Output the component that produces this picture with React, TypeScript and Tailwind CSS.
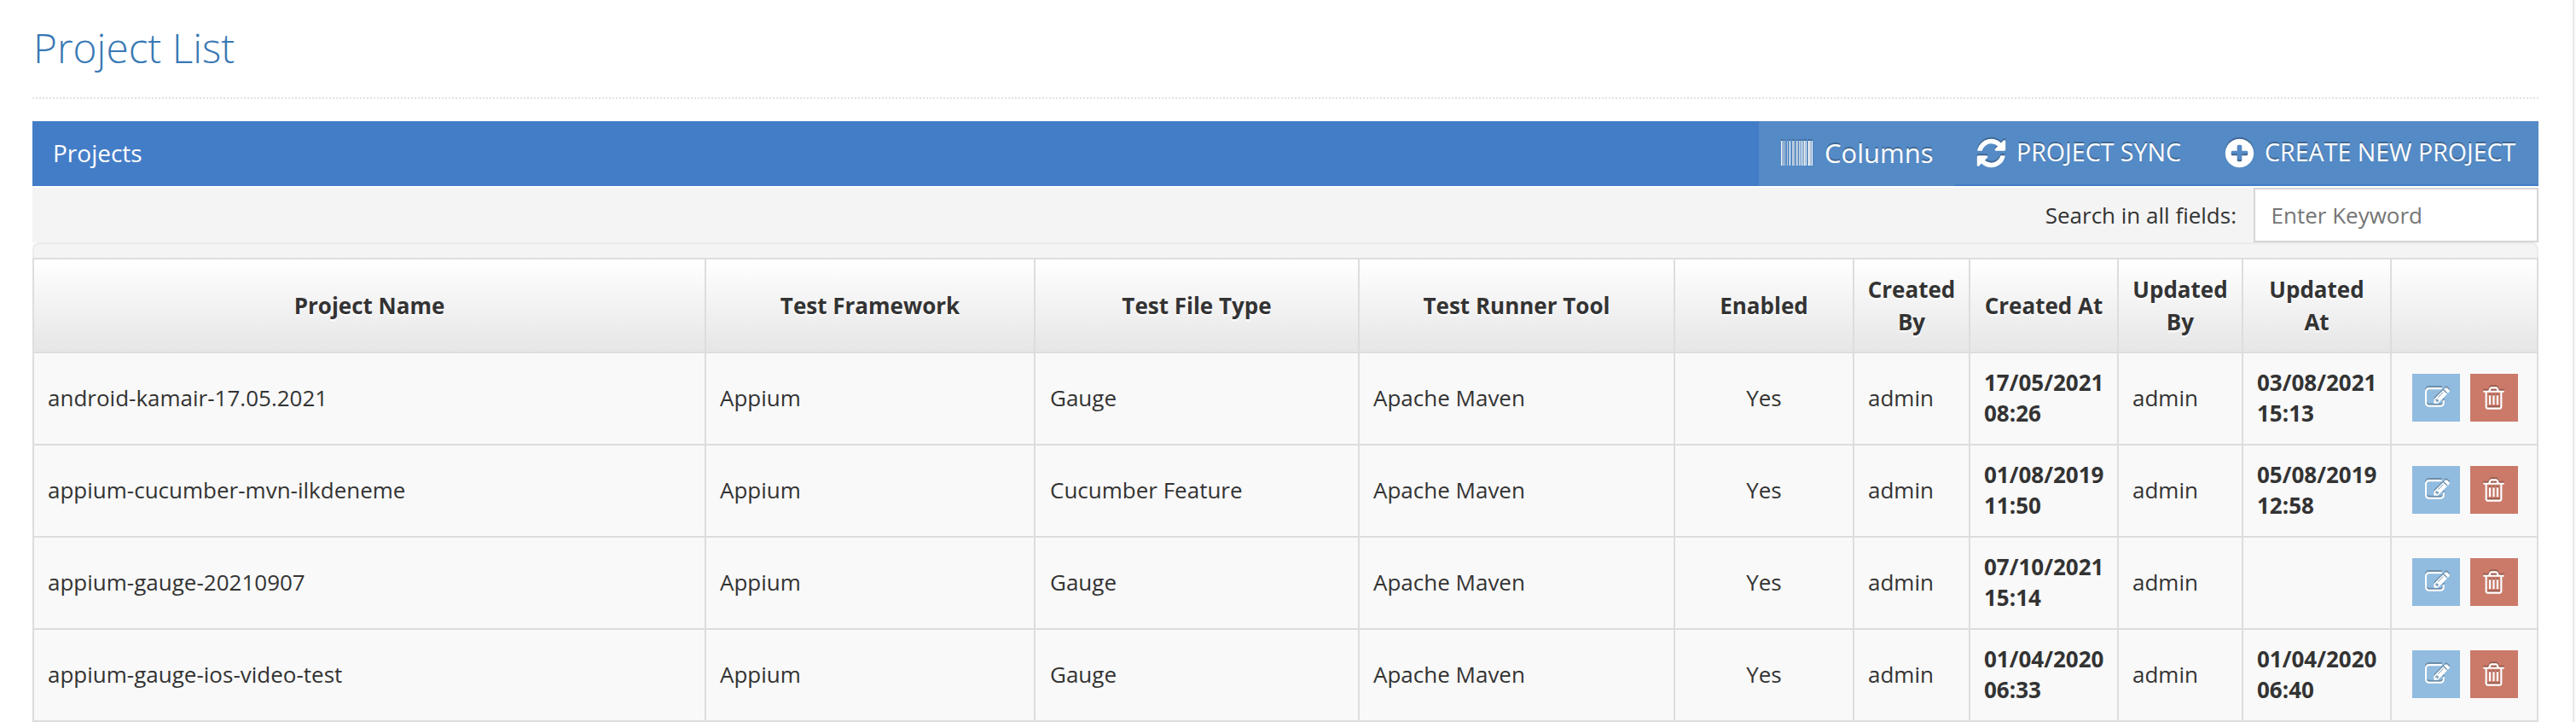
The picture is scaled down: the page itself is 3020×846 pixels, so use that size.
import React from "react";

const rows = [
  ["android-kamair-17.05.2021", "Gauge", "17/05/2021 08:26", "03/08/2021 15:13"],
  ["appium-cucumber-mvn-ilkdeneme", "Cucumber Feature", "01/08/2019 11:50", "05/08/2019 12:58"],
  ["appium-gauge-20210907", "Gauge", "07/10/2021 15:14", ""],
  ["appium-gauge-ios-video-test", "Gauge", "01/04/2020 06:33", "01/04/2020 06:40"],
];

const headers = [
  "Project Name",
  "Test Framework",
  "Test File Type",
  "Test Runner Tool",
  "Enabled",
  "Created By",
  "Created At",
  "Updated By",
  "Updated At",
  "",
];

const bars = [
  [0, 63], [94, 32], [189, 31], [346, 31], [472, 62], [629, 31], [692, 31], [755, 31],
  [880, 63], [1037, 63], [1163, 63], [1289, 63], [1383, 63], [1541, 94], [1666, 32], [1729, 63],
];

const iconShadow = "[filter:drop-shadow(0_-2px_0_rgba(0,0,0,0.25))]";

function BarcodeIcon() {
  return (
    <svg viewBox="0 0 1792 1408" className={`mb-px h-[29px] w-[37px] shrink-0 ${iconShadow}`} fill="#fff">
      {bars.map(([x, w]) => (
        <rect key={x} x={x} y="0" width={w} height="1408" />
      ))}
    </svg>
  );
}

function Glyph({ d, className }: { d: string; className: string }) {
  return (
    <svg viewBox="0 0 1792 1792" className={`shrink-0 ${className} ${iconShadow}`} fill="#fff">
      <path d={d} />
    </svg>
  );
}

const REFRESH =
  "M1639 1056q0 5-1 7-64 268-268 434.5t-478 166.5q-146 0-282.5-55t-243.5-157l-129 129q-19 19-45 19t-45-19-19-45v-448q0-26 19-45t45-19h448q26 0 45 19t19 45-19 45l-137 137q71 66 161 102t187 36q134 0 250-65t186-179q11-17 53-117 8-23 30-23h192q13 0 22.5 9.5t9.5 22.5zm25-800v448q0 26-19 45t-45 19h-448q-26 0-45-19t-19-45 19-45l138-138q-148-137-349-137-134 0-250 65t-186 179q-11 17-53 117-8 23-30 23h-199q-13 0-22.5-9.5t-9.5-22.5v-7q65-268 270-434.5t480-166.5q146 0 284 55.5t245 156.5l130-129q19-19 45-19t45 19 19 45z";
const PLUS_CIRCLE =
  "M1344 960v-128q0-26-19-45t-45-19h-256v-256q0-26-19-45t-45-19h-128q-26 0-45 19t-19 45v256h-256q-26 0-45 19t-19 45v128q0 26 19 45t45 19h256v256q0 26 19 45t45 19h128q26 0 45-19t19-45v-256h256q26 0 45-19t19-45zm320-64q0 209-103 385.5t-279.5 279.5-385.5 103-385.5-103-279.5-279.5-103-385.5 103-385.5 279.5-279.5 385.5-103 385.5 103 279.5 279.5 103 385.5z";
const EDIT =
  "M888 1184l116-116-152-152-116 116v56h96v96h56zm440-720q-16-16-33 1l-350 350q-17 17-1 33t33-1l350-350q17-17 1-33zm80 594v190q0 119-84.5 203.5t-203.5 84.5h-832q-119 0-203.5-84.5t-84.5-203.5v-832q0-119 84.5-203.5t203.5-84.5h832q63 0 117 25 15 7 18 23 3 17-9 29l-49 49q-14 14-32 8-23-6-45-6h-832q-66 0-113 47t-47 113v832q0 66 47 113t113 47h832q66 0 113-47t47-113v-126q0-13 9-22l64-64q15-15 35-7t20 29zm-96-738l288 288-672 672h-288v-288zm444 132l-92 92-288-288 92-92q28-28 68-28t68 28l152 152q28 28 28 68t-28 68z";
const TRASH =
  "M704 736v576q0 14-9 23t-23 9h-64q-14 0-23-9t-9-23v-576q0-14 9-23t23-9h64q14 0 23 9t9 23zm256 0v576q0 14-9 23t-23 9h-64q-14 0-23-9t-9-23v-576q0-14 9-23t23-9h64q14 0 23 9t9 23zm256 0v576q0 14-9 23t-23 9h-64q-14 0-23-9t-9-23v-576q0-14 9-23t23-9h64q14 0 23 9t9 23zm128 724v-948h-896v948q0 22 7 40.5t14.5 27 10.5 8.5h832q3 0 10.5-8.5t14.5-27 7-40.5zm-672-1076h448l-48-117q-7-9-17-11h-317q-10 2-17 11zm928 32v64q0 14-9 23t-23 9h-96v948q0 83-47 143.5t-113 60.5h-832q-66 0-113-58.5t-47-141.5v-952h-96q-14 0-23-9t-9-23v-64q0-14 9-23t23-9h309l70-167q15-37 54-63t79-26h320q40 0 79 26t54 63l70 167h309q14 0 23 9t9 23z";

const toolButton =
  "flex items-center bg-[#548ac5] [text-shadow:0_-2px_0_rgba(0,0,0,0.25)]";
const line = "border-[#dddddd] border-r-2 border-b-2";
const grid =
  "grid grid-cols-[788px_386px_380px_370px_210px_136px_174px_146px_174px_172px] border-l-2 border-[#dddddd]";

function Cell({ children, className = "pl-4" }: { children?: React.ReactNode; className?: string }) {
  return <div className={`flex items-center bg-[#f9f9f9] pb-[2px] ${line} ${className}`}>{children}</div>;
}

export default function App() {
  return (
    <div className="flex h-[846px] w-[3020px] overflow-hidden bg-white font-['Open_Sans',sans-serif] text-[26px] leading-9 text-[#333333]">
      <main className="w-[3016px] pl-[38px] pr-10">
        <h1 className="h-[114px] pt-[23px] pl-px text-[47.8px] leading-[66px] font-light text-[#3878b4]">Project List</h1>
        <svg className="block h-[2px] w-[2938px]" viewBox="0 0 2938 2">
          <line x1="0" y1="1" x2="2938" y2="1" stroke="#e2e2e2" strokeWidth="2" strokeDasharray="2 2" />
        </svg>

        <div className="mt-[26px] flex h-[76px] bg-[#447dc7] text-[28px] text-white">
          <div className="flex flex-1 items-center pl-6 pb-[2px]">Projects</div>
          <div className="flex">
            <button className={`${toolButton} w-[230px] pl-[26px] text-[31px]`}>
              <BarcodeIcon />
              <span className="ml-[14px] pb-[2px]">Columns</span>
            </button>
            <button className={`${toolButton} h-[74px] w-[291px] pl-[23px] text-[28.6px]`}>
              <Glyph d={REFRESH} className="mt-px h-[39px] w-[39px]" />
              <span className="ml-[10px] pb-[3px]">PROJECT SYNC</span>
            </button>
            <button className={`${toolButton} h-[74px] w-[393px] pl-[23px] text-[28.6px]`}>
              <Glyph d={PLUS_CIRCLE} className="mt-px h-[39px] w-[39px]" />
              <span className="ml-[10px] pb-[3px]">CREATE NEW PROJECT</span>
            </button>
          </div>
        </div>

        <div className="mt-[2px] flex h-16 items-center justify-end bg-[#f4f4f4]">
          <label className="mr-5">Search in all fields:</label>
          <input
            placeholder="Enter Keyword"
            className="h-16 w-[334px] border-2 border-[#d5d5d5] bg-white pl-[18.5px] placeholder:text-[#757575]"
          />
        </div>
        <div className="h-[18px] rounded-t-[8px] border-2 border-b-0 border-[#ebebeb] bg-[#f4f4f4]" />

        <div className={`${grid} border-t-2`}>
          {headers.map((h, i) => (
            <div
              key={i}
              className={`flex h-[110px] items-center justify-center bg-linear-to-b from-white to-[#e6e6e6] px-4 text-center leading-[38px] font-bold [text-shadow:0_2px_2px_#fff] ${line}`}
            >
              {h}
            </div>
          ))}
        </div>

        {rows.map(([name, type, created, updated]) => (
          <div key={name} className={`${grid} h-[108px]`}>
            <Cell>{name}</Cell>
            <Cell>Appium</Cell>
            <Cell className="pl-[17px]">{type}</Cell>
            <Cell>Apache Maven</Cell>
            <Cell className="justify-center">Yes</Cell>
            <Cell>admin</Cell>
            <Cell className="pl-4 font-bold">{created}</Cell>
            <Cell>admin</Cell>
            <Cell className="pl-4 font-bold">{updated}</Cell>
            <Cell className="gap-3 pl-6">
              <button className="flex h-14 w-14 items-center justify-center bg-[#91bce0] pl-[3px]">
                <Glyph d={EDIT} className="h-[29px] w-[29px]" />
              </button>
              <button className="flex h-14 w-14 items-center justify-center bg-[#cb7a69] pt-px pr-px">
                <Glyph d={TRASH} className="h-[31px] w-[31px]" />
              </button>
            </Cell>
          </div>
        ))}
      </main>
      <aside className="w-1 border-l-2 border-[#e8e8e8] bg-[#fbfbfb]" />
    </div>
  );
}
